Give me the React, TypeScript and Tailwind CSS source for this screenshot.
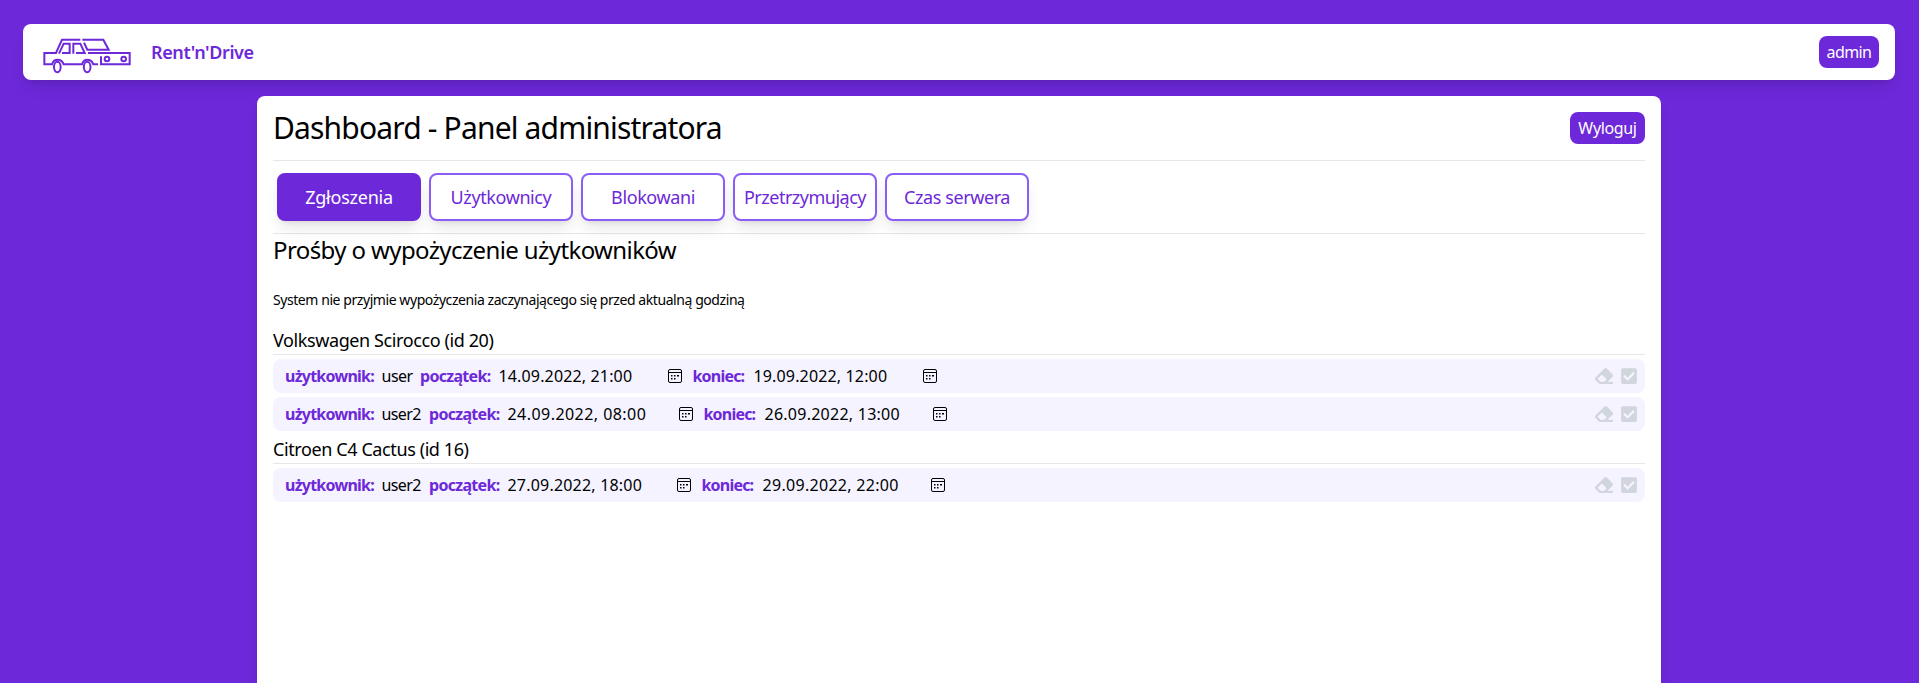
import React from "react";
import { FaCheckSquare, FaEraser } from "react-icons/fa";

type Field = { value: string; width: string; tracking: string };
type Rental = { user: Field; start: Field; end: Field };
type Car = { name: string; rentals: Rental[] };

const cars: Car[] = [
  {
    name: "Volkswagen Scirocco (id 20)",
    rentals: [
      {
        user: { value: "user", width: "w-[38.5px]", tracking: "tracking-[-0.5px]" },
        start: { value: "14.09.2022, 21:00", width: "w-[169px]", tracking: "tracking-[0.15px]" },
        end: { value: "19.09.2022, 12:00", width: "w-[169px]", tracking: "tracking-[0.15px]" },
      },
      {
        user: { value: "user2", width: "w-[47.5px]", tracking: "tracking-[-0.6px]" },
        start: { value: "24.09.2022, 08:00", width: "w-[171px]", tracking: "tracking-[0.45px]" },
        end: { value: "26.09.2022, 13:00", width: "w-[168px]", tracking: "tracking-[0.25px]" },
      },
    ],
  },
  {
    name: "Citroen C4 Cactus (id 16)",
    rentals: [
      {
        user: { value: "user2", width: "w-[47.5px]", tracking: "tracking-[-0.6px]" },
        start: { value: "27.09.2022, 18:00", width: "w-[169px]", tracking: "tracking-[0.2px]" },
        end: { value: "29.09.2022, 22:00", width: "w-[168px]", tracking: "tracking-[0.3px]" },
      },
    ],
  },
];

const tabs = [
  { label: "Zgłoszenia", tracking: "tracking-[-0.25px]", active: true },
  { label: "Użytkownicy", tracking: "tracking-[-0.4px]", active: false },
  { label: "Blokowani", tracking: "tracking-[-0.4px]", active: false },
  { label: "Przetrzymujący", tracking: "tracking-[-0.5px]", active: false },
  { label: "Czas serwera", tracking: "tracking-[-0.4px]", active: false },
];

function CarLogo() {
  return (
    <svg viewBox="39 36 264 111" className="h-[37px] w-[88px] shrink-0" fill="none" stroke="#6d28d9" strokeWidth="6">
      <path d="M151 44H96L78 84H43V118H66Q70 104 83 104Q96 104 101 118H156Q160 104 172 104Q185 104 190 118H204" />
      <path d="M87 86L101 56H119V84H96" />
      <path d="M130 86V56H151L164 84H138" />
      <path d="M157 44H220L236 74H172L162 53" />
      <path d="M174 84H299V118H213V94" />
      <ellipse cx="82" cy="126" rx="10" ry="15.5" />
      <ellipse cx="171.500" cy="126" rx="10" ry="15.5" />
      <circle cx="231" cy="102" r="7" />
      <circle cx="281" cy="102" r="7" />
    </svg>
  );
}

function CalendarIcon() {
  return (
    <svg viewBox="0 0 14 14" className="h-[14px] w-[14px] shrink-0">
      <rect x="0.5" y="0.5" width="13" height="13" rx="1.5" fill="none" stroke="#000" />
      <path d="M1 3.5H13" stroke="#000" />
      <path d="M6 6h1.500v1.500H6zM9 6h2v1.500H9zM3 6h1.500v1.500H3zM3 9h1.500v1.500H3zM6 9h1.500v1.500H6z" fill="#000" />
    </svg>
  );
}

function DateField({ label, labelClass, field }: { label: string; labelClass: string; field: Field }) {
  return (
    <div className="flex items-center">
      <span className={`font-bold text-[#6d28d9] ${labelClass}`}>{label}</span>
      <span className={field.width + " " + field.tracking}>{field.value}</span>
      <CalendarIcon />
    </div>
  );
}

function RentalRow({ rental }: { rental: Rental }) {
  return (
    <div className="mb-1 flex h-[34px] items-center rounded-lg bg-[#f5f3ff] pr-[7px] pl-3 text-base whitespace-nowrap text-black">
      <span className="w-[96.5px] pb-px font-bold tracking-[-0.75px] text-[#6d28d9]">użytkownik:</span>
      <span className={rental.user.width + " pb-px " + rental.user.tracking}>{rental.user.value}</span>
      <DateField label="początek:" labelClass="w-[78.5px] tracking-[-0.7px]" field={rental.start} />
      <div className="w-[11px]" />
      <DateField label="koniec:" labelClass="w-[61px] tracking-[-0.8px]" field={rental.end} />
      <div className="ml-auto flex items-center gap-[7px] text-lg text-gray-300">
        <FaEraser />
        <FaCheckSquare />
      </div>
    </div>
  );
}

export default function App() {
  return (
    <div className="flex h-[683px] flex-col overflow-hidden bg-[#6d28d9] pt-6 font-['Noto_Sans',sans-serif]">
      <header className="mr-6 ml-[23px] flex h-14 shrink-0 items-center rounded-lg bg-white px-4 shadow-lg">
        <div className="flex pt-[7px] pl-1">
          <CarLogo />
        </div>
        <span className="ml-[20px] text-lg font-semibold tracking-[-0.4px] text-[#6d28d9]">Rent'n'Drive</span>
        <button className="ml-auto flex h-8 w-[60px] items-center justify-center rounded-lg bg-[#6d28d9] text-base tracking-[-0.6px] text-white">admin</button>
      </header>
      <main className="mt-4 mr-[258px] ml-[257px] flex-1 rounded-t-lg bg-white p-4 text-black shadow-lg">
        <div className="flex h-[49px] items-start justify-between border-b border-gray-200">
          <h1 className="text-3xl leading-8 tracking-[-0.83px]">Dashboard - Panel administratora</h1>
          <button className="flex h-8 w-[75px] items-center justify-center rounded-lg bg-[#6d28d9] text-base tracking-[-0.35px] text-white">Wyloguj</button>
        </div>
        <nav className="flex h-[73px] gap-2 border-b border-gray-200 px-1 pt-3">
          {tabs.map((t) => (
            <button
              key={t.label}
              className={`h-12 w-36 rounded-lg border-2 text-lg whitespace-nowrap shadow-lg ${t.tracking} ${
                t.active ? "border-[#6d28d9] bg-[#6d28d9] text-white" : "border-[#8b5cf6] bg-white text-[#6d28d9]"
              }`}
            >
              {t.label}
            </button>
          ))}
        </nav>
        <h2 className="text-2xl leading-8 tracking-[-0.61px]">Prośby o wypożyczenie użytkowników</h2>
        <p className="mt-6 text-sm leading-5 tracking-[-0.43px]">System nie przyjmie wypożyczenia zaczynającego się przed aktualną godziną</p>
        <div className="mt-4">
          {cars.map((car) => (
            <section key={car.name}>
              <h3 className="mb-1 h-[29px] border-b border-gray-200 text-lg leading-7 tracking-[-0.4px]">{car.name}</h3>
              {car.rentals.map((r) => (
                <RentalRow key={r.start.value} rental={r} />
              ))}
            </section>
          ))}
        </div>
      </main>
    </div>
  );
}
